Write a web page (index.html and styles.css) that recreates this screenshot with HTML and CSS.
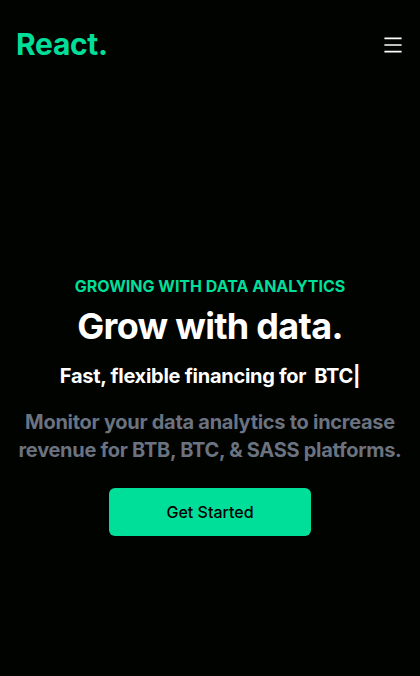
FILE: index.html
```html
<!DOCTYPE html>
<html lang="en">
<head>
<meta charset="utf-8">
<title>React.</title>
<link rel="stylesheet" href="styles.css">
</head>
<body>
  <header class="navbar">
    <h1 class="logo">React.</h1>
    <button class="menu-btn" aria-label="Menu">
      <svg class="menu-icon" viewBox="0 0 1024 1024" width="22" height="22" fill="currentColor">
        <path d="M904 160H120c-4.4 0-8 3.6-8 8v64c0 4.4 3.6 8 8 8h784c4.4 0 8-3.6 8-8v-64c0-4.4-3.6-8-8-8zm0 624H120c-4.4 0-8 3.6-8 8v64c0 4.4 3.6 8 8 8h784c4.4 0 8-3.6 8-8v-64c0-4.4-3.6-8-8-8zm0-312H120c-4.4 0-8 3.6-8 8v64c0 4.4 3.6 8 8 8h784c4.4 0 8-3.6 8-8v-64c0-4.4-3.6-8-8-8z"/>
      </svg>
    </button>
  </header>
  <main class="hero">
    <p class="eyebrow">GROWING WITH DATA ANALYTICS</p>
    <h2 class="headline">Grow with data.</h2>
    <div class="tagline">
      <p class="tagline-text">Fast, flexible financing for</p>
      <span class="typed">BTC<span class="typed-cursor">|</span></span>
    </div>
    <p class="lead">Monitor your data analytics to increase revenue for BTB, BTC, &amp; SASS platforms.</p>
    <button class="cta">Get Started</button>
  </main>
</body>
</html>
```

FILE: styles.css
```css
* {
  box-sizing: border-box;
}

html, body {
  margin: 0;
  padding: 0;
  background: #000300;
  color: #ffffff;
  font-family: Inter, "Noto Sans", sans-serif;
}

.navbar {
  height: 88px;
  display: flex;
  justify-content: space-between;
  align-items: center;
  padding: 0 16px;
}

.logo {
  margin: 0;
  font-size: 30px;
  line-height: 36px;
  font-weight: 700;
  letter-spacing: -0.3px;
  color: #00df9a;
}

.menu-btn {
  background: none;
  border: 0;
  padding: 0;
  color: #ffffff;
  display: flex;
  margin-top: 2px;
}

.hero {
  display: flex;
  flex-direction: column;
  align-items: center;
  text-align: center;
  padding-top: 178px;
}

.eyebrow {
  margin: 0;
  padding: 8px;
  font-size: 16px;
  line-height: 24px;
  font-weight: 700;
  color: #00df9a;
}

.headline {
  margin: 0;
  font-size: 36px;
  line-height: 40px;
  font-weight: 700;
  letter-spacing: -0.7px;
}

.tagline {
  display: flex;
  justify-content: center;
  align-items: center;
}

.tagline-text {
  margin: 0;
  padding: 16px 0;
  font-size: 20px;
  line-height: 28px;
  font-weight: 700;
  letter-spacing: -0.27px;
}

.typed {
  padding-left: 8px;
  font-size: 20px;
  line-height: 28px;
  font-weight: 700;
  letter-spacing: -0.27px;
}

.lead {
  margin: 2px 0 0;
  padding: 0 12px;
  font-size: 20px;
  line-height: 28px;
  font-weight: 700;
  letter-spacing: -0.28px;
  color: #6b7280;
}

.cta {
  margin: 24px auto;
  width: 202px;
  padding: 12px 0;
  border: 0;
  border-radius: 6px;
  background: #00df9a;
  color: #000000;
  font-family: Inter, "Noto Sans", sans-serif;
  font-size: 16px;
  line-height: 24px;
  font-weight: 500;
}
```
